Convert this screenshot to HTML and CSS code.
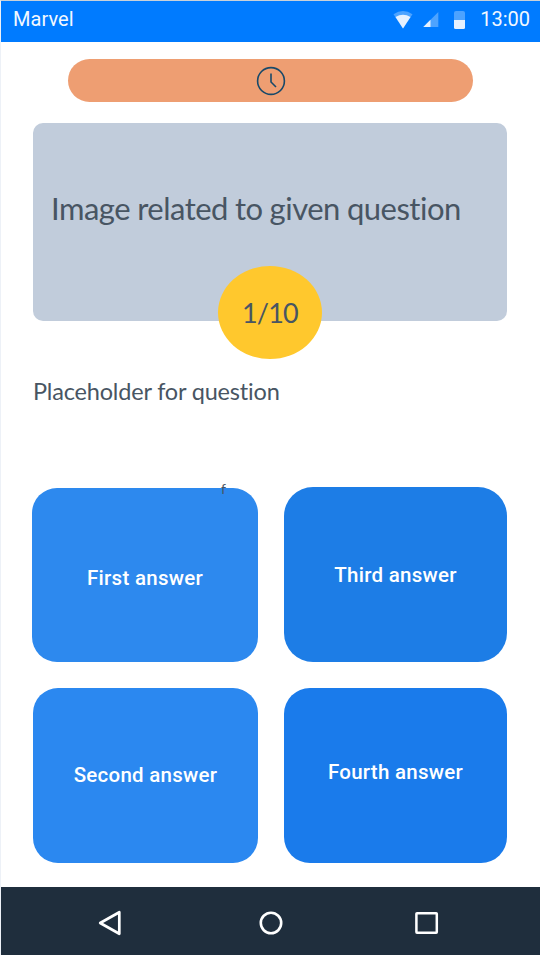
FILE: index.html
```html
<!DOCTYPE html>
<html lang="en">
<head>
<meta charset="utf-8">
<title>Marvel</title>
<link rel="stylesheet" href="styles.css">
</head>
<body>
<div class="screen">
  <header class="status-bar">
    <span class="carrier">Marvel</span>
    <div class="status-icons">
      <svg class="wifi" width="20" height="18" viewBox="0 0 20 18"><path d="M0.5 3.2Q10-3 19.5 3.2L10 17.5Z" fill="#4da3ff"/><path d="M2.5 6Q10 1.5 17.5 6L10 17.5Z" fill="#e6f1ff"/></svg>
      <svg class="signal" width="16" height="15" viewBox="0 0 16 15"><path d="M15.3 0V15H0.3Z" fill="#4da3ff"/><path d="M7.5 7.8V15H0.3Z" fill="#e6f1ff"/></svg>
      <svg class="battery" width="11" height="18" viewBox="0 0 11 18"><path d="M2 0H9Q11 0 11 2V9H0V2Q0 0 2 0Z" fill="#4da3ff"/><path d="M0 9H11V16.5Q11 18 9.5 18H1.5Q0 18 0 16.5Z" fill="#e6f1ff"/></svg>
    </div>
    <span class="time">13:00</span>
  </header>
  <main class="quiz">
    <div class="timer">
      <svg width="30" height="30" viewBox="0 0 30 30" fill="none" stroke="#17496a" stroke-width="1.6"><circle cx="15" cy="15" r="13.4"/><path d="M15 7.5V16L20 21"/></svg>
    </div>
    <section class="picture">
      <span class="picture-text">Image related to given question</span>
      <div class="counter"><span>1/10</span></div>
    </section>
    <p class="question">Placeholder for question</p>
    <div class="answers">
      <div class="column left">
        <button class="answer first">First answer<span class="mark">f</span></button>
        <button class="answer second">Second answer</button>
      </div>
      <div class="column right">
        <button class="answer third">Third answer</button>
        <button class="answer fourth">Fourth answer</button>
      </div>
    </div>
  </main>
  <nav class="nav-bar">
    <svg class="back" width="24" height="28" viewBox="0 0 24 28"><path d="M21.3 3.2V24.8L2.2 14Z" fill="none" stroke="#fff" stroke-width="2.7" stroke-linejoin="round"/></svg>
    <svg class="home" width="24" height="24" viewBox="0 0 24 24"><circle cx="12" cy="12" r="10.2" fill="none" stroke="#fff" stroke-width="2.6"/></svg>
    <svg class="recent" width="24" height="24" viewBox="0 0 24 24"><rect x="1.4" y="2.2" width="20.4" height="19.5" rx=".6" fill="none" stroke="#fff" stroke-width="2.5"/></svg>
  </nav>
</div>
</body>
</html>
```

FILE: styles.css
```css
* { box-sizing: border-box; }
body { margin: 0; background: #fff; }
.screen {
  width: 540px;
  height: 955px;
  display: flex;
  flex-direction: column;
  border-left: 1px solid #edf1f7;
  border-top: 1px solid #c9d1d9;
  background: #fff;
  color: #485563;
  font-family: Lato, sans-serif;
  font-variant-ligatures: none;
  overflow: hidden;
}
.status-bar {
  height: 41px;
  flex: none;
  display: flex;
  align-items: flex-start;
  padding: 6px 10px 0 12px;
  background: #007bff;
  color: #f2f8ff;
  font: 20px/24px Roboto, sans-serif;
}
.carrier { letter-spacing: .05px; }
.status-icons { display: flex; margin-left: auto; align-items: flex-start; }
.wifi { margin: 4px 10px 0 0; }
.signal { margin: 5px 15px 0 0; }
.battery { margin: 4px 15px 0 0; }
.quiz {
  flex: 1;
  padding: 17px 32px 0;
  display: flex;
  flex-direction: column;
}
.timer {
  width: 405px;
  height: 43px;
  margin-left: 35px;
  border-radius: 22px;
  background: #ee9e72;
  display: flex;
  align-items: center;
  justify-content: center;
}
.picture {
  position: relative;
  width: 474px;
  height: 198px;
  margin-top: 21px;
  padding: 66px 0 0 18px;
  border-radius: 10px;
  background: #c1ccdb;
}
.picture-text { display: block; font-size: 31px; line-height: 38px; white-space: nowrap; letter-spacing: -.5px; word-spacing: -.4px; }
.counter {
  position: absolute;
  left: 185px;
  top: 143px;
  width: 104px;
  height: 93px;
  border-radius: 50%;
  background: #ffc82d;
  display: flex;
  align-items: center;
  justify-content: center;
  font-size: 27px;
  line-height: 32px;
  letter-spacing: -.8px;
}
.question { margin: 55px 0 0; font-size: 23.5px; line-height: 30px; white-space: nowrap; letter-spacing: -.18px; }
.answers {
  display: flex;
  justify-content: space-between;
  width: 475px;
  margin: 81px 0 0 -1px;
}
.column { display: flex; flex-direction: column; }
.left { width: 226px; padding-top: 1px; gap: 26px; align-items: flex-end; }
.right { width: 223px; gap: 26px; }
.answer {
  position: relative;
  border: 0;
  padding: 0;
  width: 223px;
  height: 175px;
  color: #fff;
  font: 500 20.5px/24px Roboto, sans-serif;
  letter-spacing: .27px;
  border-radius: 28px;
}
.first { width: 226px; height: 174px; padding-top: 6px; border-radius: 25px; background: #2d89ee; }
.second { width: 225px; padding-bottom: 2px; border-radius: 25px; background: #2b88f0; }
.third { background: #1d7de6; border-radius: 29px; }
.fourth { background: #1a7beb; padding-bottom: 8px; border-radius: 26px; }
.mark {
  position: absolute;
  left: 189px;
  top: -7px;
  color: #485563;
  font: 400 14px/16px Lato, sans-serif;
}
.nav-bar {
  height: 68px;
  flex: none;
  display: flex;
  align-items: center;
  padding: 4px 0 0 97px;
  background: #1f2e3d;
}
.home { margin-left: 137px; }
.recent { margin-left: 132px; }
```
